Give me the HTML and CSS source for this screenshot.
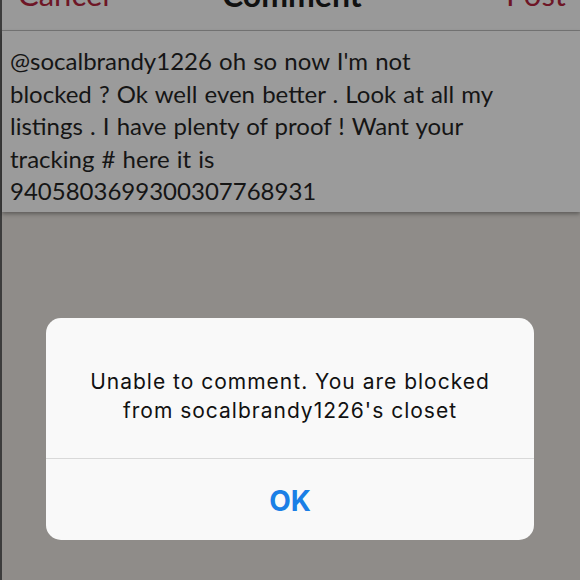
FILE: index.html
```html
<!DOCTYPE html>
<html>
<head>
<meta charset="utf-8">
<link rel="stylesheet" href="styles.css">
</head>
<body>
<div class="screen">
  <div class="navbar">
    <span class="nav-btn nav-cancel">Cancel</span>
    <span class="nav-title">Comment</span>
    <span class="nav-btn nav-post">Post</span>
  </div>
  <div class="comment-box">
    <p class="comment-text">@socalbrandy1226 oh so now I'm not<br>blocked ? Ok well even better . Look at all my<br>listings . I have plenty of proof ! Want your<br>tracking # here it is<br>9405803699300307768931</p>
  </div>
  <div class="backdrop">
    <div class="alert">
      <div class="alert-message">Unable to comment. You are blocked<br>from socalbrandy1226's closet</div>
      <div class="alert-action">OK</div>
    </div>
  </div>
</div>
</body>
</html>
```
FILE: styles.css
```css
html, body {
  margin: 0;
  padding: 0;
  width: 580px;
  height: 580px;
  overflow: hidden;
  background: #8e8b88;
}
.screen {
  width: 578px;
  height: 580px;
  border-left: 2px solid #3c3c3c;
  display: flex;
  flex-direction: column;
  background: #8e8b88;
}
.navbar {
  height: 30px;
  flex: none;
  background: #999999;
  border-bottom: 1px solid #767676;
  display: flex;
  align-items: flex-start;
  overflow: hidden;
  font-family: "Lato", "Open Sans", sans-serif;
  font-size: 31px;
  line-height: 31px;
}
.nav-btn, .nav-title {
  margin-top: -21px;
}
.nav-cancel {
  color: #6e1626;
  margin-left: 16px;
}
.nav-title {
  color: #111;
  font-weight: 700;
  font-size: 32px;
  margin-left: auto;
  margin-right: auto;
  position: relative;
  left: -16px;
}
.nav-post {
  color: #6e1626;
  margin-right: 14px;
}
.comment-box {
  flex: none;
  height: 181px;
  background: #9b9b9b;
  box-shadow: 0 2px 4px rgba(0,0,0,0.35);
  padding: 0 8px;
  position: relative;
  z-index: 1;
}
.comment-text {
  margin: 0;
  padding-top: 14px;
  font-family: "Lato", "Open Sans", sans-serif;
  font-size: 24px;
  word-spacing: 1px;
  line-height: 32.5px;
  color: #151515;
}
.backdrop {
  flex: 1;
  display: flex;
  justify-content: center;
  padding-top: 106px;
  background: #8f8c89;
}
.alert {
  width: 488px;
  height: 222px;
  background: #f9f9f9;
  border-radius: 15px;
  display: flex;
  flex-direction: column;
  font-family: "Inter", "Open Sans", sans-serif;
  margin-left: -2px;
}
.alert-message {
  height: 141px;
  border-bottom: 1px solid #d9d9d9;
  box-sizing: border-box;
  padding-top: 49px;
  text-align: center;
  font-size: 21px;
  letter-spacing: 1px;
  line-height: 29px;
  color: #111;
}
.alert-action {
  flex: 1;
  display: flex;
  align-items: center;
  justify-content: center;
  color: #1a7fe6;
  font-size: 28px;
  font-weight: 700;
  padding-top: 2px;
}
```
